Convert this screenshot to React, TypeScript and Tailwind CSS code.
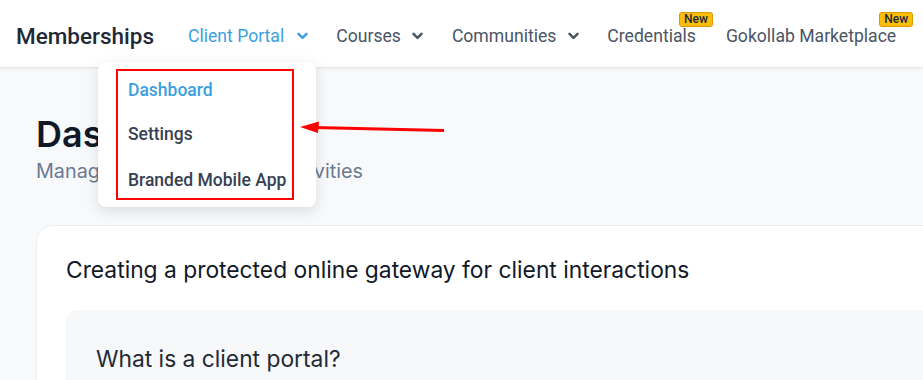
import React from "react";

function Chevron({ className }: { className?: string }) {
  return (
    <svg className={className} width="11" height="8" viewBox="0 0 11 8" fill="none">
      <path d="M1.5 1.8 L5.5 5.8 L9.5 1.8" stroke="currentColor" strokeWidth="2.5" strokeLinecap="round" strokeLinejoin="round" />
    </svg>
  );
}

function Badge() {
  return (
    <span className="absolute -top-[13px] -right-[17px] rounded-[3px] border border-[#d99a00] bg-[#fbbf0b] px-[4px] text-[12px] leading-[13px] font-medium text-[#1f2937]">
      New
    </span>
  );
}

export default function App() {
  return (
    <div className="relative h-[380px] w-[923px] overflow-hidden bg-[#f8f9fb]" style={{ fontFamily: "Roboto, sans-serif" }}>
      <header className="flex h-[67px] items-center bg-white pl-[16px] pt-[5px] shadow-[0_1px_3px_rgba(0,0,0,0.12)]">
        <div className="text-[22.5px] leading-[26px] font-medium text-[#1f2937]">Memberships</div>
        <nav className="ml-[34px] flex items-center text-[17.6px] leading-[22px] text-[#4b5563]">
          <div className="flex items-center gap-[13px] text-[#3b9fe0]">
            <span>Client Portal</span>
            <Chevron />
          </div>
          <div className="ml-[28px] flex items-center gap-[11px]">
            <span>Courses</span>
            <Chevron />
          </div>
          <div className="ml-[29px] flex items-center gap-[12px]">
            <span>Communities</span>
            <Chevron />
          </div>
          <div className="relative ml-[28px]">
            <span>Credentials</span>
            <Badge />
          </div>
          <div className="relative ml-[30px]">
            <span>Gokollab Marketplace</span>
            <Badge />
          </div>
        </nav>
      </header>

      <main className="px-[36px] pt-[45px]" style={{ fontFamily: "Inter, sans-serif" }}>
        <h1 className="text-[36px] leading-[44px] font-semibold text-[#111827]">Dashboard</h1>
        <p className="mt-[2px] text-[19.8px] leading-[26px] text-[#6b7a90]">Manage your client portal activities</p>
        <section className="mt-[41px] mr-[-120px] rounded-[16px] border border-[#eceef1] bg-white px-[29px] pt-[29px]">
          <h2 className="text-[22.8px] leading-[30px] text-[#111827]">Creating a protected online gateway for client interactions</h2>
          <div className="mt-[25px] h-[120px] rounded-[12px] bg-[#f7f8fa] px-[30px] pt-[34px]">
            <h3 className="text-[22.8px] leading-[30px] text-[#1f2937]">What is a client portal?</h3>
          </div>
        </section>
      </main>

      <div className="absolute left-[98px] top-[62px] h-[145px] w-[218px] rounded-[8px] bg-white pl-[18px] pr-[22px] py-[7px] shadow-[0_4px_14px_rgba(0,0,0,0.12)]">
        <div className="flex h-full flex-col border-2 border-[#ff0000] pl-[10px] text-[17.5px] font-medium text-[#374151]">
          <div className="pt-[6px] leading-[26px] text-[#3b9fe0]">Dashboard</div>
          <div className="mt-[18px] leading-[26px]">Settings</div>
          <div className="mt-[20px] leading-[26px]">Branded Mobile App</div>
        </div>
      </div>

      <svg className="absolute left-[298px] top-[118px]" width="150" height="20" viewBox="0 0 150 20">
        <line x1="16" y1="9.5" x2="146" y2="12.5" stroke="#ff0000" strokeWidth="3" />
        <polygon points="2,9 21,3.5 20,15" fill="#ff0000" />
      </svg>
    </div>
  );
}
